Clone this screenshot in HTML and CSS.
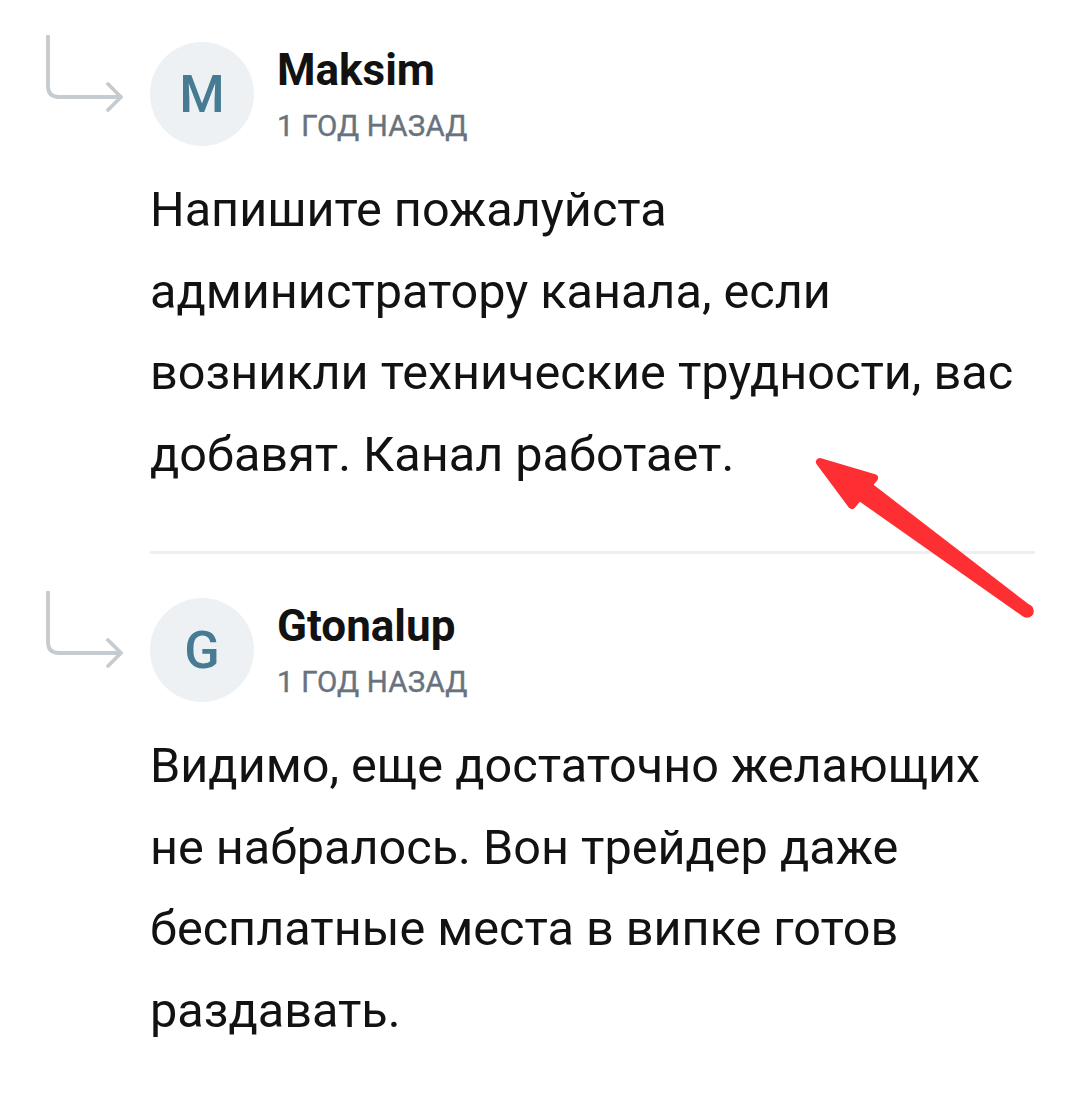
FILE: index.html
```html
<!DOCTYPE html>
<html lang="ru">
<head>
<meta charset="utf-8">
<title>Комментарии</title>
<link rel="stylesheet" href="styles.css">
</head>
<body>
<main class="thread">
  <article class="comment comment-first">
    <div class="reply-icon">
      <svg width="150" height="80" viewBox="0 0 150 80" aria-hidden="true">
        <path d="M48 1 V51 Q48 62 59 62 H121 M108 49 L121 62 L108 75" fill="none" stroke="#c6cbcf" stroke-width="3.8" stroke-linecap="round" stroke-linejoin="round"/>
      </svg>
    </div>
    <div class="content">
      <header class="head">
        <div class="avatar">M</div>
        <div class="meta">
          <div class="name">Maksim</div>
          <div class="date">1 год назад</div>
        </div>
      </header>
      <p class="text">Напишите пожалуйста администратору канала, если возникли технические трудности, вас добавят. Канал работает.</p>
    </div>
  </article>
  <div class="divider"></div>
  <article class="comment comment-next">
    <div class="reply-icon">
      <svg width="150" height="80" viewBox="0 0 150 80" aria-hidden="true">
        <path d="M48 1 V51 Q48 62 59 62 H121 M108 49 L121 62 L108 75" fill="none" stroke="#c6cbcf" stroke-width="3.8" stroke-linecap="round" stroke-linejoin="round"/>
      </svg>
    </div>
    <div class="content">
      <header class="head">
        <div class="avatar">G</div>
        <div class="meta">
          <div class="name">Gtonalup</div>
          <div class="date">1 год назад</div>
        </div>
      </header>
      <p class="text">Видимо, еще достаточно желающих не набралось. Вон трейдер даже бесплатные места в випке готов раздавать.</p>
    </div>
  </article>
</main>
<svg class="annotation" width="1080" height="1107" viewBox="0 0 1080 1107" aria-hidden="true">
  <polygon points="820,462 874,478 852,505" fill="#fd2f33" stroke="#fd2f33" stroke-width="8" stroke-linejoin="round"/>
  <polygon points="856,499 870,482 1031,606 1023,616.5" fill="#fd2f33"/>
  <circle cx="1027" cy="611" r="6.8" fill="#fd2f33"/>
</svg>
</body>
</html>
```

FILE: styles.css
```css
html, body {
  margin: 0;
  padding: 0;
  background: #ffffff;
}

body {
  font-family: Roboto, "Noto Sans", "Liberation Sans", sans-serif;
  color: #121212;
  position: relative;
  width: 1080px;
  height: 1107px;
  overflow: hidden;
}

.thread {
  padding-top: 35px;
}

.comment {
  display: flex;
}

.comment-next {
  margin-top: 37px;
}

.reply-icon {
  width: 150px;
  flex: 0 0 150px;
}

.reply-icon svg {
  display: block;
}

.content {
  flex: 1;
  padding-top: 7px;
  padding-right: 50px;
}

.head {
  display: flex;
  align-items: flex-start;
  gap: 23px;
}

.avatar {
  width: 104px;
  height: 104px;
  border-radius: 50%;
  background: #edf1f4;
  color: #477b93;
  font-size: 52px;
  font-weight: 500;
  display: flex;
  align-items: center;
  justify-content: center;
  flex: 0 0 104px;
}

.meta {
  padding-top: 2px;
}

.name {
  font-size: 44px;
  line-height: 52px;
  font-weight: 700;
  color: #121212;
}

.date {
  margin-top: 10px;
  font-size: 29.5px;
  line-height: 40px;
  font-weight: 400;
  letter-spacing: 0.2px;
  text-transform: uppercase;
  color: #68737d;
  -webkit-text-stroke: 0.4px #68737d;
}

.text {
  margin: 23px 0 0 0;
  font-size: 48.6px;
  line-height: 81.5px;
  font-weight: 400;
  color: #121212;
}

.divider {
  margin: 56px 45px 0 150px;
  height: 3px;
  background: #efefef;
}

.annotation {
  position: absolute;
  left: 0;
  top: 0;
  pointer-events: none;
}
```
